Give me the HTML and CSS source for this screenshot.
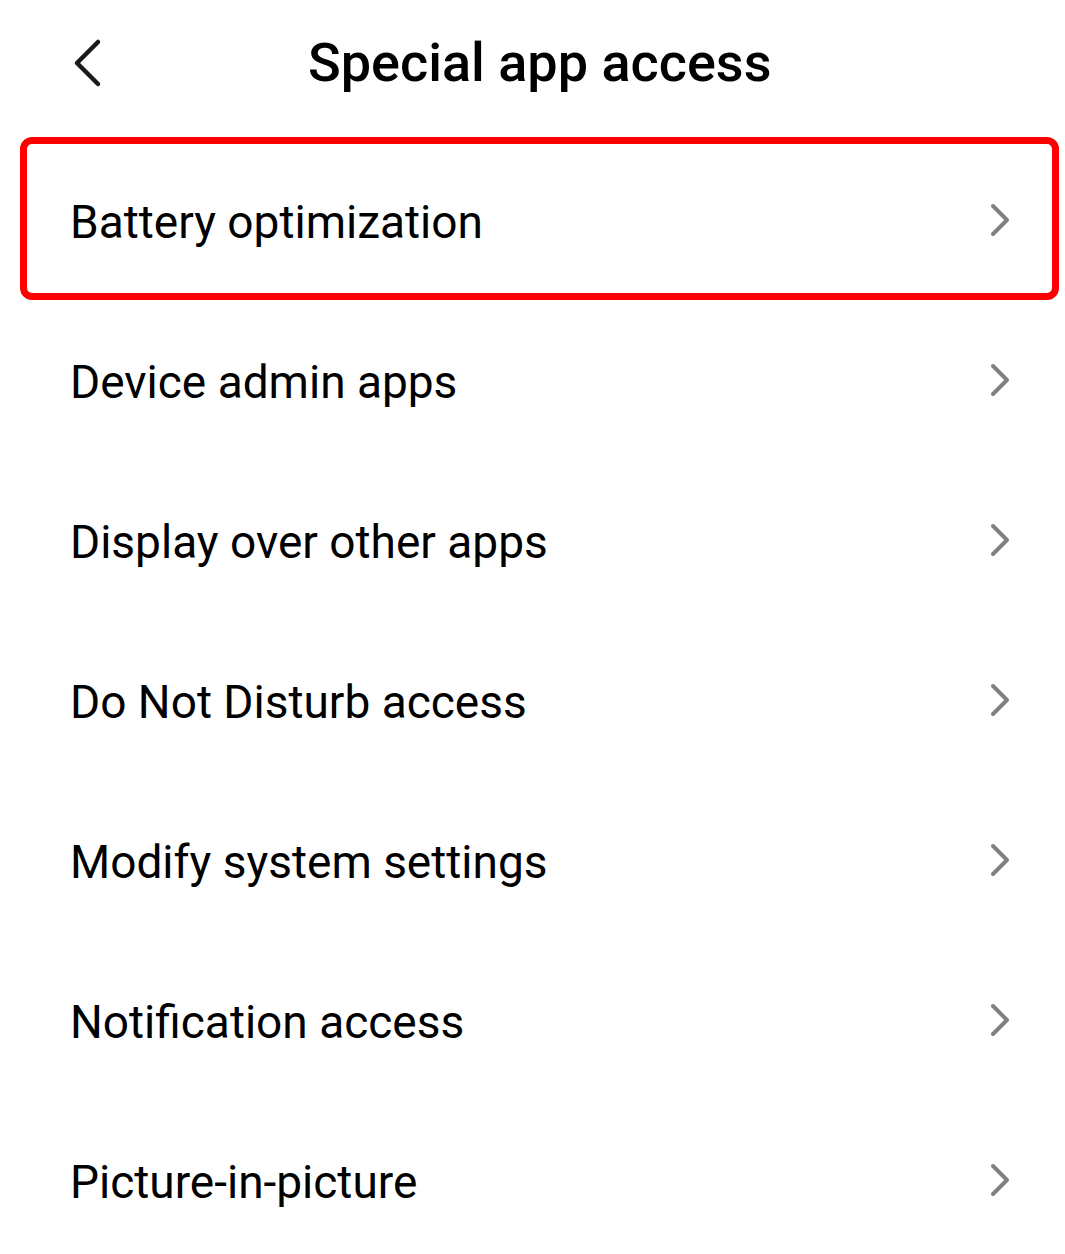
FILE: index.html
```html
<!DOCTYPE html>
<html>
<head>
<meta charset="utf-8">
<link rel="stylesheet" href="styles.css">
</head>
<body>
<div class="page">
  <header class="header">
    <span class="back">
      <svg width="34" height="50" viewBox="0 0 34 50"><path d="M30 4 L9 25 L30 46" fill="none" stroke="#1a1a1a" stroke-width="4.5" stroke-linecap="round" stroke-linejoin="round"/></svg>
    </span>
    <h1 class="title">Special app access</h1>
  </header>
  <ul class="list">
    <li class="row highlighted"><span class="label">Battery optimization</span><svg class="chev" width="24" height="36" viewBox="0 0 24 36"><path d="M5 4 L19 18 L5 32" fill="none" stroke="#808080" stroke-width="4" stroke-linecap="round" stroke-linejoin="round"/></svg></li>
    <li class="row"><span class="label">Device admin apps</span><svg class="chev" width="24" height="36" viewBox="0 0 24 36"><path d="M5 4 L19 18 L5 32" fill="none" stroke="#808080" stroke-width="4" stroke-linecap="round" stroke-linejoin="round"/></svg></li>
    <li class="row"><span class="label">Display over other apps</span><svg class="chev" width="24" height="36" viewBox="0 0 24 36"><path d="M5 4 L19 18 L5 32" fill="none" stroke="#808080" stroke-width="4" stroke-linecap="round" stroke-linejoin="round"/></svg></li>
    <li class="row"><span class="label">Do Not Disturb access</span><svg class="chev" width="24" height="36" viewBox="0 0 24 36"><path d="M5 4 L19 18 L5 32" fill="none" stroke="#808080" stroke-width="4" stroke-linecap="round" stroke-linejoin="round"/></svg></li>
    <li class="row"><span class="label">Modify system settings</span><svg class="chev" width="24" height="36" viewBox="0 0 24 36"><path d="M5 4 L19 18 L5 32" fill="none" stroke="#808080" stroke-width="4" stroke-linecap="round" stroke-linejoin="round"/></svg></li>
    <li class="row"><span class="label">Notification access</span><svg class="chev" width="24" height="36" viewBox="0 0 24 36"><path d="M5 4 L19 18 L5 32" fill="none" stroke="#808080" stroke-width="4" stroke-linecap="round" stroke-linejoin="round"/></svg></li>
    <li class="row"><span class="label">Picture-in-picture</span><svg class="chev" width="24" height="36" viewBox="0 0 24 36"><path d="M5 4 L19 18 L5 32" fill="none" stroke="#808080" stroke-width="4" stroke-linecap="round" stroke-linejoin="round"/></svg></li>
  </ul>
</div>
</body>
</html>
```
FILE: styles.css
```css
html, body { margin: 0; padding: 0; background: #fff; }
body { font-family: Roboto, "Noto Sans", sans-serif; color: #000; }
.page { width: 1065px; height: 1254px; overflow: hidden; }
.header { height: 125px; display: flex; align-items: center; padding-left: 68px; box-sizing: border-box; }
.back { display: flex; width: 34px; height: 50px; }
.title { margin: 0 0 0 206px; font-size: 54px; font-weight: 500; letter-spacing: 0; line-height: 1; }
.list { list-style: none; margin: 15px 0 0; padding: 0; }
.row { position: relative; height: 160px; display: flex; align-items: center; justify-content: space-between; padding: 4px 53px 0 70px; box-sizing: border-box; }
.label { font-size: 46px; line-height: 1; }
.chev { margin-top: -4px; }
.highlighted::after { content: ""; position: absolute; left: 20px; right: 6px; top: -3px; bottom: 0; border: 7px solid #ff0000; border-radius: 12px; }
```
